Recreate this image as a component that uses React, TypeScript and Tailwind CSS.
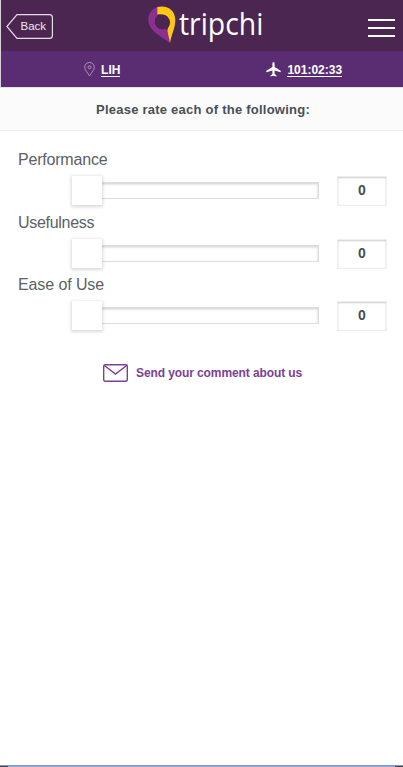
const ratings = [
  { label: 'Performance', value: 0, height: 'h-[63px]', tracking: 'tracking-[-0.2px]' },
  { label: 'Usefulness', value: 0, height: 'h-[62px]', tracking: 'tracking-[-0.3px]' },
  { label: 'Ease of Use', value: 0, height: 'h-[63px]', tracking: 'tracking-[-0.1px]' },
];

function BackButton() {
  return (
    <button className="relative mt-[14px] ml-[5px] h-[26px] w-[48px] shrink-0 text-left">
      <svg className="absolute inset-0" width="48" height="26" viewBox="0 0 48 26" fill="none" stroke="#e6dde8" strokeWidth="1.2">
        <path d="M11 .6H43.5Q46.4 .6 46.4 3.5V21.5Q46.4 24.4 43.5 24.4H11L.9 12.5Z" />
      </svg>
      <span className="absolute top-[5px] left-[14.5px] text-[11.5px] leading-[15px] text-[#eee8f0]">Back</span>
    </button>
  );
}

function Logo() {
  return (
    <div className="ml-[94px] flex w-[117px] shrink-0">
      <svg className="mt-[6px] shrink-0" width="28" height="38" viewBox="0 0 28 38">
        <path d="M9.3 1C4 2.8 .3 7.5 .3 13.5C.3 19.5 4 24 9 28C13 31 18 34 22 37L21.5 26L17 22.8A7.8 7.8 0 0 1 9.3 9.8Z" fill="#8d2f91" />
        <path d="M9.3 1C19-1.5 27.3 4 27.3 14C27.3 22 23.5 28.5 22 37C21.3 32 20 29 19.5 25C18.8 22 22.5 20 22 16C21.5 11 16 7 9.3 8.8Z" fill="#fdc816" />
        <circle cx="14.3" cy="16" r="7.3" fill="#4a2650" />
      </svg>
      <span className="mt-[2px] ml-[3px] origin-left scale-x-[.915] font-['Open_Sans',sans-serif] text-[31px] leading-[43px] text-white">tripchi</span>
    </div>
  );
}

export default function App() {
  return (
    <main className="flex h-[767px] w-[403px] flex-col overflow-hidden bg-white font-['Liberation_Sans',Arial,sans-serif] text-[#474f56]">
      <header className="flex h-[51px] shrink-0 border-l border-[#d9d4dc] bg-[#4a2650]">
        <BackButton />
        <Logo />
        <button className="mt-[19px] ml-[103px] flex h-[18px] w-[27px] shrink-0 flex-col justify-between">
          <span className="h-[2px] w-full bg-white" />
          <span className="h-[2px] w-full bg-white" />
          <span className="h-[2px] w-full bg-white" />
        </button>
      </header>
      <nav className="flex h-9 shrink-0 items-center border-l border-[#d9d4dc] bg-[#5a2d72] text-xs font-bold text-white">
        <a className="flex w-[202px] items-center justify-center pl-px">
          <svg className="mr-[6px]" width="11" height="15" viewBox="0 0 11 15" fill="none" stroke="#ad91ba">
            <path d="M5.5 14C4.5 11.5.7 8.5.7 5.2A4.8 4.8 0 0 1 10.3 5.2C10.3 8.5 6.5 11.5 5.5 14Z" />
            <circle cx="5.5" cy="5.2" r="1.5" />
          </svg>
          <span className="mt-[2px] border-b border-white leading-[12px]">LIH</span>
        </a>
        <a className="flex w-[201px] items-center justify-center pl-[3px]">
          <svg className="mr-[6px]" width="15" height="15" viewBox="0 0 15 15" fill="white">
            <path d="M7.5 0C8.2 0 8.6.8 8.6 1.8V5L14.7 8.7V10.2L8.6 8.4V12L10.5 13.5V14.6L7.5 13.8 4.5 14.6V13.5L6.4 12V8.4L.3 10.2V8.7L6.4 5V1.8C6.4.8 6.8 0 7.5 0Z" />
          </svg>
          <span className="mt-[2px] border-b border-white leading-[12px]">101:02:33</span>
        </a>
      </nav>
      <h1 className="h-11 shrink-0 border-t border-b border-t-[#e5e1e8] border-b-[#eeeeee] bg-[#fbfbfb] pl-[3px] text-center text-[13px] leading-[43px] font-bold tracking-[.24px]">
        Please rate each of the following:
      </h1>
      <section className="pt-[19px]">
        {ratings.map(({ label, value, height, tracking }) => (
          <div key={label} className={height}>
            <div className={`h-[25px] pl-[18px] text-[16px] leading-5 text-[#5b6167] ${tracking}`}>{label}</div>
            <div className="flex h-[31px] items-center pl-[72px]">
              <div className="z-10 h-[29px] w-[30px] shrink-0 bg-white shadow-[0_1px_3px_1px_rgba(0,0,0,0.15)]" />
              <div className="h-[17px] w-[217px] shrink-0 border-t-2 border-r border-b border-[#dddddd] shadow-[inset_-1px_1px_2px_rgba(0,0,0,0.1)]" />
              <div className="ml-[18px] h-[30px] w-[50px] shrink-0 border border-[#eeeeee] text-center text-[14px] leading-[27px] font-bold shadow-[inset_0_1px_2px_rgba(0,0,0,0.2)]">{value}</div>
            </div>
          </div>
        ))}
      </section>
      <a className="mt-[25px] flex h-5 items-center pl-[103px] text-xs font-bold text-[#7a4196]">
        <svg className="mr-[8px] shrink-0" width="25" height="18" viewBox="0 0 25 18" fill="none" stroke="#7a4196" strokeWidth="1.4">
          <rect x=".7" y=".7" width="23.6" height="16.6" rx="1.5" />
          <path d="M1 1.2 12.5 10 24 1.2" />
        </svg>
        <span className="tracking-[-0.1px] whitespace-nowrap">Send your comment about us</span>
      </a>
      <footer className="mt-auto flex h-[2px] shrink-0 border-t border-[#8799bd]">
        <span className="w-2 bg-[#444444]" />
        <span className="flex-1 bg-[#91a9d2]" />
        <span className="w-2 bg-[#444444]" />
      </footer>
    </main>
  );
}
